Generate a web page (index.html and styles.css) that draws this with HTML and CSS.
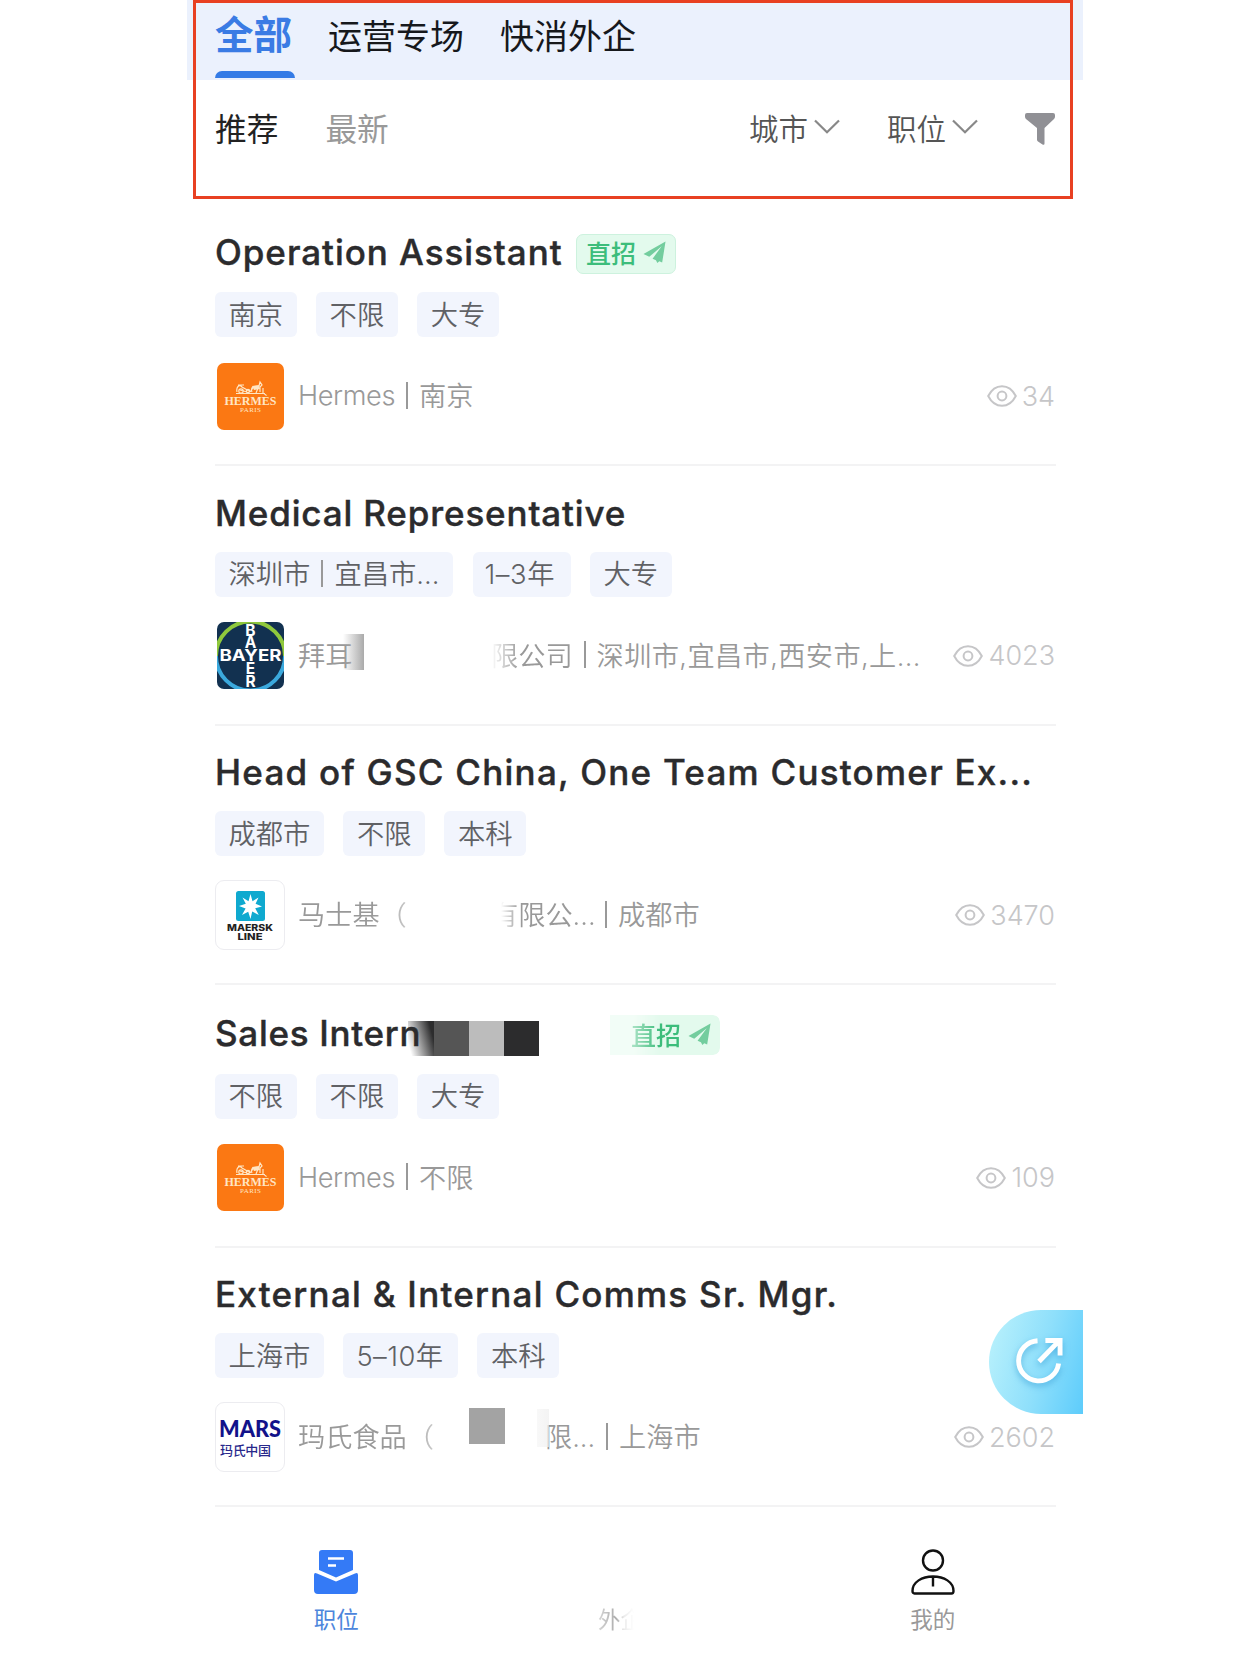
FILE: index.html
```html
<!DOCTYPE html>
<html lang="zh-CN">
<head>
<meta charset="utf-8">
<title>职位</title>
<link rel="stylesheet" href="styles.css">
</head>
<body>
<svg class="defs" width="0" height="0" aria-hidden="true">
  <symbol id="eye" viewBox="0 0 30 22"><path d="M1.200 11C4 5.500 9 1.200 15 1.200S26 5.500 28.800 11C26 16.500 21 20.800 15 20.800S4 16.500 1.200 11Z"/><circle cx="15" cy="11" r="4.400"/></symbol>
  <symbol id="plane" viewBox="0 0 24 24"><path d="M23.500 0.500 0.500 13.500 6.500 16.500 19.500 5.500 10 18.500 13.500 20 15 23 17 21 20 22.500Z"/></symbol>
  <symbol id="chevron" viewBox="0 0 26 15"><path d="M1 1.500 13 13.200 25 1.500"/></symbol>
  <symbol id="hermes" viewBox="0 0 67 67">
    <g fill="none" stroke="#ffe6c4" stroke-width="1.200">
      <path d="M19 30.500H48M20 29C19 24 22 21 25 24L32 28M23 27 30 29M35 29C33 24 37 23 42 23L43 19 45 22 43 24V29M36 25 33 29M41 25 39 30M46 25V30M21 22H27"/>
      <circle cx="24" cy="28" r="2.200"/><circle cx="31" cy="28" r="1.700"/>
    </g>
    <path d="M35 23 42 22 43 26 37 27Z" fill="#ffe6c4"/>
    <text x="33.500" y="41.500" class="hermes-name" textLength="52" lengthAdjust="spacingAndGlyphs">HERMÈS</text>
    <text x="33.500" y="49" class="hermes-city" textLength="21">PARIS</text>
  </symbol>
</svg>
<div class="app">
  <nav class="tabs">
    <span class="tab active">全部</span>
    <span class="tab">运营专场</span>
    <span class="tab">快消外企</span>
  </nav>
  <div class="filters">
    <span class="sort on">推荐</span>
    <span class="sort">最新</span>
    <span class="pick">城市<svg><use href="#chevron"/></svg></span>
    <span class="pick">职位<svg><use href="#chevron"/></svg></span>
    <svg class="funnel" viewBox="0 0 30 32"><path d="M2 0H28Q30 0 30 2V3.500Q30 5 29 6L19.500 15V30.500Q19.500 32.500 17.500 31.500L13 28.500Q12 28 12 26.500V15L1 6Q0 5 0 3.500V2Q0 0 2 0Z"/></svg>
  </div>
  <div class="highlight"></div>

  <main class="list">
    <article class="job">
      <div class="head direct"><h2 class="t1">Operation Assistant</h2><span class="badge">直招<svg><use href="#plane"/></svg></span></div>
      <div class="tags"><span>南京</span><span>不限</span><span>大专</span></div>
      <div class="info">
        <svg class="logo hermes"><use href="#hermes"/></svg>
        <div class="company"><span class="latin">Hermes</span><i></i><span>南京</span></div>
        <div class="views"><svg><use href="#eye"/></svg>34</div>
      </div>
    </article>

    <article class="job">
      <div class="head"><h2 class="t2">Medical Representative</h2></div>
      <div class="tags"><span class="cities">深圳市<i></i>宜昌市...</span><span class="years">1–3年</span><span>大专</span></div>
      <div class="info">
        <svg class="logo bayer" viewBox="0 0 67 67">
          <rect width="67" height="67" fill="#123150"/>
          <g fill="none" stroke-width="4"><path d="M-1 34A34.500 34.500 0 0 1 68 34" stroke="#8fc83c"/><path d="M68 34A34.500 34.500 0 0 1 -1 34" stroke="#3ba9dd"/></g>
          <g class="bayer-text"><text x="33.500" y="13.500">B</text><text x="33.500" y="26">A</text><text x="33.500" y="39" textLength="62" lengthAdjust="spacingAndGlyphs">BAYER</text><text x="33.500" y="52">E</text><text x="33.500" y="65">R</text></g>
        </svg>
        <div class="company"><span class="bayer-name">拜耳</span><span class="fade bayer-end">限公司</span><i></i><span class="long">深圳市,宜昌市,西安市,上...</span></div>
        <div class="views"><svg><use href="#eye"/></svg>4023</div>
      </div>
    </article>

    <article class="job">
      <div class="head"><h2 class="t3">Head of GSC China, One Team Customer Ex...</h2></div>
      <div class="tags"><span>成都市</span><span>不限</span><span>本科</span></div>
      <div class="info">
        <svg class="logo plain" viewBox="0 0 68 68">
          <rect x="20" y="10" width="29" height="30" rx="2.500" fill="#0fa9cf"/>
          <path fill="#fff" d="M34.500 13 36.500 20.300 42.500 16.500 39.600 22.800 46 25.500 39.200 27.200 42.800 34 36.200 30.600 34.500 38 32.200 30.800 26 34 29.600 27.500 23 25 29.800 22.800 26.500 16.500 32.500 20.200Z"/>
          <g class="maersk-text"><text x="34" y="50" textLength="46" lengthAdjust="spacingAndGlyphs">MAERSK</text><text x="34" y="59" textLength="25" lengthAdjust="spacingAndGlyphs">LINE</text></g>
        </svg>
        <div class="company"><span class="maersk-name">马士基（</span><span class="fade maersk-end">有限公...</span><i></i><span>成都市</span></div>
        <div class="views"><svg><use href="#eye"/></svg>3470</div>
      </div>
    </article>

    <article class="job">
      <div class="head direct"><h2 class="t4">Sales Intern</h2><div class="mosaic"><b></b><b></b><b></b><b></b></div><span class="badge erased">直招<svg><use href="#plane"/></svg></span></div>
      <div class="tags"><span>不限</span><span>不限</span><span>大专</span></div>
      <div class="info">
        <svg class="logo hermes"><use href="#hermes"/></svg>
        <div class="company"><span class="latin">Hermes</span><i></i><span>不限</span></div>
        <div class="views"><svg><use href="#eye"/></svg>109</div>
      </div>
    </article>

    <article class="job">
      <div class="head"><h2 class="t5">External &amp; Internal Comms Sr. Mgr.</h2></div>
      <div class="tags"><span>上海市</span><span class="years-long">5–10年</span><span>本科</span></div>
      <div class="info">
        <svg class="logo plain" viewBox="0 0 68 68">
          <text x="3" y="34" class="mars" textLength="62" lengthAdjust="spacingAndGlyphs">MARS</text>
          <text x="4" y="52" class="mars-cn" textLength="51">玛氏中国</text>
        </svg>
        <div class="company"><span class="mars-name">玛氏食品（</span><span class="mars-end">限...</span><i></i><span>上海市</span></div>
        <div class="views"><svg><use href="#eye"/></svg>2602</div>
      </div>
      <div class="share">
        <svg viewBox="0 0 50 50"><path d="M23 3.800A20.500 20.500 0 1 0 44.500 27M24.500 25 44 5M31 3.500H46V19"/></svg>
      </div>
    </article>
  </main>

  <footer class="bottom">
    <div class="item current">
      <svg viewBox="0 0 44 44"><path fill="#347af6" d="M8 0H36Q39 0 39 3V20L22 27.500 5 20V3Q5 0 8 0ZM0 25Q0 22 3 23.500L22 31.500 41 23.500Q44 22 44 25V40Q44 44 40 44H4Q0 44 0 40Z"/><path d="M14 8.500H30M14 15.500H22" stroke="#fff" stroke-width="2.400"/></svg>
      <span>职位</span>
    </div>
    <div class="item middle"><span>外企</span></div>
    <div class="item">
      <svg viewBox="0 0 44 46" fill="none" stroke="#111" stroke-width="2.400"><circle cx="22" cy="11.500" r="10"/><path d="M1.500 42C1.500 33 11 27.500 22 27.500S42.500 33 42.500 42Q42.500 44.500 40.500 44.500H3.500Q1.500 44.500 1.500 42ZM22 28V37.500"/></svg>
      <span>我的</span>
    </div>
  </footer>
</div>
</body>
</html>
```
FILE: styles.css
```css
* { box-sizing: border-box; }
body { margin: 0; background: #fff; font-family: Inter, "Noto Sans CJK SC", sans-serif; }
.defs { position: absolute; }
.app { position: relative; width: 896px; height: 1660px; margin-left: 187px; overflow: hidden; }

.tabs { display: flex; height: 80px; padding-left: 28px; background: #ebf1fd; font-size: 34px; line-height: 74px; color: #16181c; }
.tab { margin-right: 36px; white-space: nowrap; }
.tab.active { display: flex; flex-direction: column; justify-content: space-between; width: 80px; margin-right: 33px; font-size: 38.500px; line-height: 71px; font-weight: 700; color: #3a7be4; height: 78px; }
.tab.active::after { content: ""; height: 7px; border-radius: 7px 7px 0 0; background: #347be6; }

.filters { display: flex; align-items: center; height: 123.500px; padding: 0 28px 30px 28px; color: #555; font-size: 29.500px; }
.sort { margin-right: 47px; font-size: 31.700px; color: #999; }
.sort.on { color: #222; }
.sort:nth-child(2) { margin-right: auto; }
.pick { display: flex; align-items: center; margin-right: 47px; font-weight: 350; }
.pick svg { width: 26px; height: 15px; margin-left: 6px; fill: none; stroke: #888; stroke-width: 2.200; }
.funnel { width: 30px; height: 32px; margin-top: 4px; fill: #909095; }
.highlight { position: absolute; left: 6px; top: 0; width: 880px; height: 199px; border: 3px solid #e84022; }

.job { position: relative; margin: 0 27px 0 28px; padding: 31px 0 33px; border-bottom: 2px solid #f3f3f4; }
.head { position: relative; display: flex; align-items: center; height: 35.500px; margin-bottom: 19px; }
.head.direct { height: 38.500px; }
h2 { margin: -4px 0 0; font-size: 35px; font-weight: 500; line-height: 36px; color: #2b2b2d; -webkit-text-stroke: .4px #2b2b2d; white-space: nowrap; }
.t1 { width: 361px; letter-spacing: .95px; }
.t2 { letter-spacing: .85px; }
.t3 { letter-spacing: 1.250px; }
.t4 { width: 219px; letter-spacing: .7px; }
.t5 { letter-spacing: 1.250px; }
.badge { display: flex; align-items: center; width: 100px; height: 40px; padding: 0 0 3px 9px; border: 1px solid #cdf2de; border-radius: 7px; background: #e3faed; color: #3cbd7b; font-size: 25px; font-weight: 500; }
.badge svg { width: 23px; height: 23px; margin: 1px 0 0 7px; fill: #73cd9e; }
.mosaic { position: absolute; left: 193px; top: 5px; display: flex; }
.mosaic b { width: 35px; height: 35px; background: #2c2c2d; }
.mosaic b:nth-child(1) { width: 26px; background: linear-gradient(75deg, #2c2c2d00 10%, #2c2c2d 85%); }
.mosaic b:nth-child(2) { background: #555; }
.mosaic b:nth-child(3) { background: #bcbcbc; }
.badge.erased { width: 110px; margin-left: 176px; padding-left: 21px; border: 0; border-radius: 0 7px 7px 0; -webkit-mask-image: linear-gradient(90deg, #0007 0 22%, #000 45%); mask-image: linear-gradient(90deg, #0007 0 22%, #000 45%); }

.tags { display: flex; gap: 19.500px; height: 45px; margin-bottom: 24px; }
.tags span { display: flex; align-items: center; padding: 0 13.500px 4px; border-radius: 6px; background: #f2f5fd; color: #606165; font-size: 27.300px; font-weight: 350; white-space: nowrap; }
i { flex: none; width: 2px; height: 27px; margin: 2px 11px 0; background: #999; }
.tags i { margin: 3px 11px 0; }
.tags .cities { width: 238px; }
.tags .years { width: 98px; padding: 0 12px 4px; letter-spacing: .6px; }
.tags .years-long { width: 114.500px; padding: 0 13px 4px; letter-spacing: .5px; }

.info { display: flex; align-items: center; height: 70px; }
.logo { flex: none; width: 67px; height: 67px; margin: 0 14px 0 2px; border-radius: 7px; }
.logo.hermes { background: #fb7813; }
.logo.plain { width: 70px; height: 70px; margin: 0 13px 0 0; border: 1.500px solid #ececf0; border-radius: 9px; }
.hermes-name, .hermes-city { font-family: "Liberation Serif", serif; font-weight: 700; fill: #ffe6c4; text-anchor: middle; }
.hermes-name { font-size: 13px; }
.hermes-city { font-size: 7px; font-weight: 400; }
.bayer-text { font-family: Inter, sans-serif; font-size: 15.500px; font-weight: 700; fill: #fff; text-anchor: middle; }
.maersk-text { font-family: Inter, sans-serif; font-size: 9.500px; font-weight: 800; fill: #222; text-anchor: middle; }
.mars { font-family: Lato, sans-serif; font-size: 23px; font-weight: 900; fill: #12128a; }
.mars-cn { font-size: 13px; font-weight: 500; fill: #29298c; }
.company { position: relative; display: flex; align-items: center; height: 40px; padding-bottom: 4px; color: #999; font-size: 27.200px; font-weight: 350; white-space: nowrap; }
.latin { width: 97px; padding-top: 3px; letter-spacing: -.4px; }
.long { letter-spacing: .4px; }
.bayer-name { position: relative; width: 193px; }
.bayer-name::after { content: ""; position: absolute; left: 45px; top: 0; width: 21px; height: 36px; background: linear-gradient(90deg, #aaa0, #aaa); }
.fade { -webkit-mask-image: linear-gradient(90deg, #0000, #000 28px); mask-image: linear-gradient(90deg, #0000, #000 28px); }
.maersk-name { width: 193px; -webkit-mask-image: linear-gradient(90deg, #000 75px, #0008 110px); mask-image: linear-gradient(90deg, #000 75px, #0008 110px); }
.maersk-end { width: 103px; -webkit-mask-image: linear-gradient(90deg, #0000 10px, #000 28px); mask-image: linear-gradient(90deg, #0000 10px, #000 28px); }
.mars-name { width: 247px; -webkit-mask-image: linear-gradient(90deg, #000 110px, #0008 135px); mask-image: linear-gradient(90deg, #000 110px, #0008 135px); }
.mars-end { width: 50px; }
.company:has(.mars-name)::before { content: ""; position: absolute; left: 171px; top: -9px; width: 36px; height: 36px; background: #a3a3a3; }
.company:has(.mars-name)::after { content: ""; position: absolute; left: 239px; top: -8px; width: 12px; height: 38px; background: linear-gradient(90deg, #f8f8f8, #eeea); }
.views { display: flex; align-items: center; margin: 0 1px 0 auto; color: #c6c6c8; font-size: 27px; font-weight: 300; }
.views svg { width: 30px; height: 22px; margin-right: 5px; fill: none; stroke: #c6c6c8; stroke-width: 2; }

.share { position: absolute; right: -27px; top: 62px; display: flex; align-items: center; width: 94px; height: 104px; padding-left: 26px; border-radius: 52px 0 0 52px; background: linear-gradient(105deg, #b4effc 10%, #8edffb 55%, #5dccfb); }
.share svg { width: 49px; height: 49px; fill: none; stroke: #fff; stroke-width: 5; filter: drop-shadow(0 3px 3px #3a9ed6a0); }

.bottom { display: flex; height: 152px; }
.item { flex: 1; display: flex; flex-direction: column; align-items: center; padding-top: 42px; color: #999; font-size: 22.500px; }
.item svg { width: 44px; height: 46px; }
.item span { margin-top: 8px; line-height: 34px; }
.item:last-child { padding-right: 1px; }
.current { color: #4d86dc; }
.middle span { width: 73px; margin-top: 54px; -webkit-mask-image: linear-gradient(90deg, #0006, #000c 18px, #0003 26px, #0000 36px); mask-image: linear-gradient(90deg, #0006, #000c 18px, #0003 26px, #0000 36px); }
```
